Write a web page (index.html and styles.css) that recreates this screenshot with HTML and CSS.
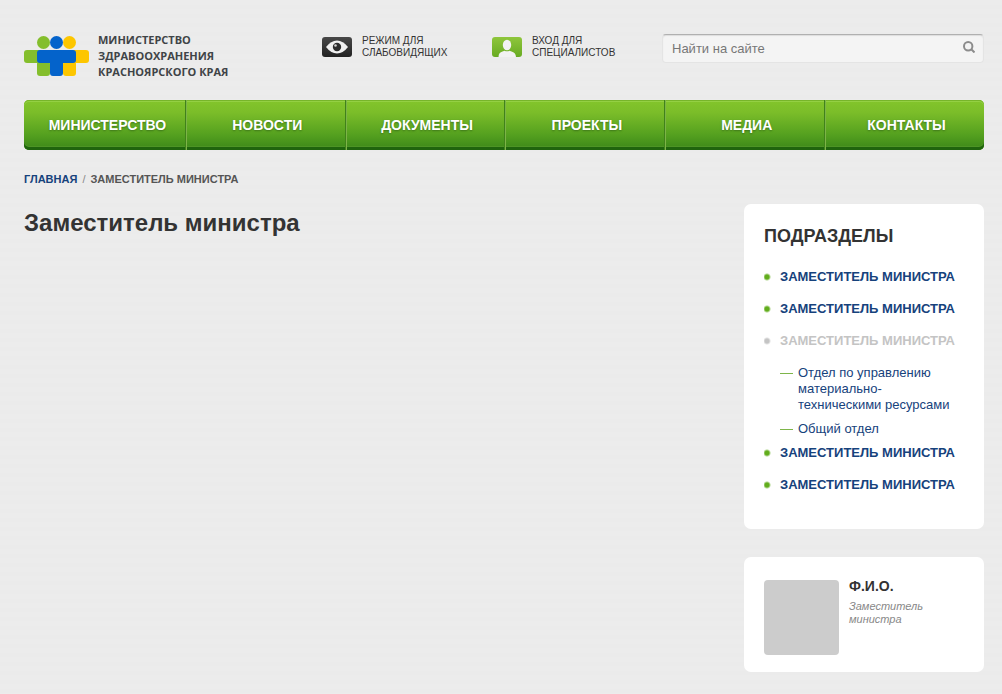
FILE: index.html
```html
<!DOCTYPE html>
<html lang="ru">
<head>
<meta charset="utf-8">
<meta name="viewport" content="width=device-width, initial-scale=1">
<title>Заместитель министра</title>
<link rel="stylesheet" href="styles.css">
</head>
<body>
<div class="page">
  <header class="header">
    <a class="logo" href="#">
      <svg class="logo-mark" width="65" height="42" viewBox="0 0 65 42" aria-hidden="true">
        <path fill="#84be2c" d="M3 15h13v13H3a3 3 0 0 1-3-3v-7a3 3 0 0 1 3-3z"/>
        <rect x="13" y="26" width="13" height="15" rx="3" fill="#84be2c"/>
        <path fill="#fdc600" d="M49 15h13a3 3 0 0 1 3 3v7a3 3 0 0 1-3 3H49z"/>
        <rect x="39" y="26" width="13" height="15" rx="3" fill="#fdc600"/>
        <path fill="#0463cb" d="M16 15h33a3 3 0 0 1 3 3v7a3 3 0 0 1-3 3H39v10a3 3 0 0 1-3 3h-7a3 3 0 0 1-3-3V28H16a3 3 0 0 1-3-3v-7a3 3 0 0 1 3-3z"/>
        <circle cx="19.500" cy="7.500" r="6.500" fill="#84be2c"/>
        <circle cx="45.500" cy="7.500" r="6.500" fill="#fdc600"/>
        <circle cx="32.500" cy="7.500" r="6.500" fill="#0463cb"/>
      </svg>
      <span class="logo-text">МИНИСТЕРСТВО<br>ЗДРАВООХРАНЕНИЯ<br>КРАСНОЯРСКОГО КРАЯ</span>
    </a>
    <a class="tool" href="#">
      <svg width="30" height="20" viewBox="0 0 30 20" aria-hidden="true">
        <defs><linearGradient id="dark" x1="0" y1="0" x2="0" y2="1"><stop offset="0" stop-color="#484848"/><stop offset="1" stop-color="#222"/></linearGradient></defs>
        <rect width="30" height="20" rx="3" fill="url(#dark)"/>
        <path fill="#f0f0f0" d="M4 10Q9 3.500 15 3.500T26 10Q21 16.500 15 16.500T4 10z"/>
        <circle cx="15" cy="10" r="4.200" fill="#2c2c2c"/>
        <circle cx="13.500" cy="8.500" r="1.300" fill="#d0d0d0"/>
      </svg>
      <span>РЕЖИМ ДЛЯ<br>СЛАБОВИДЯЩИХ</span>
    </a>
    <a class="tool" href="#">
      <svg width="30" height="20" viewBox="0 0 30 20" aria-hidden="true">
        <defs><linearGradient id="green" x1="0" y1="0" x2="0" y2="1"><stop offset="0" stop-color="#8fc63c"/><stop offset="1" stop-color="#68ab22"/></linearGradient></defs>
        <rect width="30" height="20" rx="3" fill="url(#green)"/>
        <ellipse cx="15" cy="8" rx="4.200" ry="5.200" fill="#f2f2f2"/>
        <path fill="#f2f2f2" d="M6.500 20c0-3 1.500-5 4-5.500l2-.8q2.500 1.300 5 0l2 .8c2.500.5 4.500 2.500 4.500 5.500z"/>
      </svg>
      <span>ВХОД ДЛЯ<br>СПЕЦИАЛИСТОВ</span>
    </a>
    <form class="search" role="search">
      <input class="search-input" type="search" placeholder="Найти на сайте" aria-label="Найти на сайте">
      <button class="search-button" type="button" aria-label="Найти">
        <svg width="12" height="12" viewBox="0 0 12 12" fill="none" stroke="#8c8c8c" stroke-width="2" aria-hidden="true"><circle cx="5.200" cy="5.200" r="4.200"/><path d="M8 8l3.500 3.500"/></svg>
      </button>
    </form>
  </header>

  <nav class="nav" aria-label="Основное меню">
    <a href="#">МИНИСТЕРСТВО</a>
    <a href="#">НОВОСТИ</a>
    <a href="#">ДОКУМЕНТЫ</a>
    <a href="#">ПРОЕКТЫ</a>
    <a href="#">МЕДИА</a>
    <a href="#">КОНТАКТЫ</a>
  </nav>

  <nav class="crumbs" aria-label="Навигация">
    <a href="#">ГЛАВНАЯ</a><span class="crumb-sep">/</span><span>ЗАМЕСТИТЕЛЬ МИНИСТРА</span>
  </nav>

  <div class="columns">
    <main class="main"><h1>Заместитель министра</h1></main>
    <aside class="sidebar">
      <section class="card sections">
        <h2>ПОДРАЗДЕЛЫ</h2>
        <ul class="menu">
          <li><a href="#">ЗАМЕСТИТЕЛЬ МИНИСТРА</a></li>
          <li><a href="#">ЗАМЕСТИТЕЛЬ МИНИСТРА</a></li>
          <li class="current"><span>ЗАМЕСТИТЕЛЬ МИНИСТРА</span>
            <ul class="submenu">
              <li><a href="#">Отдел по управлению материально-техническими ресурсами</a></li>
              <li><a href="#">Общий отдел</a></li>
            </ul>
          </li>
          <li><a href="#">ЗАМЕСТИТЕЛЬ МИНИСТРА</a></li>
          <li><a href="#">ЗАМЕСТИТЕЛЬ МИНИСТРА</a></li>
        </ul>
      </section>
      <section class="card person">
        <div class="photo"></div>
        <div class="person-info">
          <h3>Ф.И.О.</h3>
          <p>Заместитель министра</p>
        </div>
      </section>
    </aside>
  </div>
</div>
</body>
</html>
```

FILE: styles.css
```css
* { box-sizing: border-box; }

body {
  margin: 0;
  background: #ebebeb repeating-linear-gradient(#ececec 0 5px, #ebebeb 5px 9px);
  color: #333;
  font-family: "Liberation Sans", Arial, sans-serif;
  font-size: 13px;
  line-height: 16px;
}

a { color: #16427c; text-decoration: none; }
h1, h2, h3, p, ul { margin: 0; padding: 0; }
ul { list-style: none; }
svg { display: block; flex: none; }

.page { padding: 32px 18px 22px 24px; }

.header {
  display: grid;
  grid-template-columns: 298fr 170fr 170fr 322fr;
  align-items: start;
  height: 68px;
}

.logo { display: flex; gap: 9px; color: #3f4447; }
.logo-mark { margin-top: 3px; }
.logo-text {
  font-family: "Open Sans", "Noto Sans", sans-serif;
  font-size: 11px;
  font-weight: 700;
  white-space: nowrap;
}

.tool {
  display: flex;
  gap: 10px;
  padding-top: 3px;
  color: #333;
  font-size: 10px;
  line-height: 12px;
  white-space: nowrap;
}
.tool svg { margin-top: 2px; }

.search {
  display: flex;
  height: 29px;
  margin-top: 2px;
  border: 1px solid #e4e4e4;
  border-top-color: #b0b0b0;
  border-radius: 4px;
  background: #f4f4f4;
  box-shadow: inset 0 1px 1px #ddd;
}
.search-input {
  flex: 1;
  min-width: 0;
  padding: 0 9px 1px;
  border: 0;
  background: none;
  color: #555;
  font: 13px "Liberation Sans", Arial, sans-serif;
}
.search-input::placeholder { color: #777; opacity: 1; }
.search-button {
  padding: 0 8px 4px;
  border: 0;
  background: none;
}

.nav {
  display: flex;
  height: 50px;
  padding-left: 2px;
  overflow: hidden;
  border-radius: 5px;
  background: linear-gradient(#83c52b, #7bbd29 25%, #54a01f 70%, #3a8618);
  box-shadow: inset 0 1px #77b52a, inset 0 2px #94d043, inset 0 -3px #1f640d, inset 0 -4px #4d9425;
}
.nav a {
  flex: 1;
  padding-left: 4px;
  border-left: 1px solid #40821a;
  box-shadow: inset 1px 0 #7db348;
  color: #fff;
  font-size: 14px;
  font-weight: 700;
  line-height: 50px;
  text-align: center;
  text-shadow: 0 1px 2px #3c741a;
}
.nav a:first-child { border-left: 0; box-shadow: none; }

.crumbs {
  display: flex;
  gap: 5px;
  margin-top: 21px;
  color: #555;
  font-size: 11px;
  font-weight: 700;
}
.crumb-sep { color: #888; font-weight: 400; }

.columns {
  display: flex;
  justify-content: space-between;
  gap: 24px;
  margin-top: 17px;
}
.main { flex: 1; }
h1 { padding-top: 4px; font-size: 24px; line-height: 30px; }

.sidebar { display: flex; flex: none; flex-direction: column; gap: 28px; width: 240px; }
.card { padding: 20px; border-radius: 7px; background: #fff; }
.sections { padding-bottom: 36px; }
h2 { margin-bottom: 21px; font-size: 18px; line-height: 24px; }

.menu { display: grid; gap: 16px; }
.menu > li {
  padding-left: 16px;
  background: radial-gradient(circle at 3px 8px, #62ad1d 2px, transparent 4px) no-repeat;
  font-weight: 700;
}
.menu > .current {
  margin-bottom: -8px;
  background-image: radial-gradient(circle at 3px 8px, #c4c4c4 2px, transparent 4px);
  color: #c4c4c4;
}
.submenu { display: grid; gap: 8px; margin-top: 16px; }
.submenu li {
  padding-left: 18px;
  background: linear-gradient(#7eb54a, #7eb54a) 0 8px / 13px 1px no-repeat;
  font-weight: 400;
}

.person { display: flex; gap: 10px; padding-top: 23px; padding-bottom: 17px; }
.photo { flex: none; width: 75px; height: 75px; border-radius: 4px; background: #ccc; }
.person-info { flex: 1; }
h3 { margin: -2px 0 6px; font-size: 14px; line-height: 16px; }
.person p { color: #888; font-size: 11px; font-style: italic; line-height: 13px; }
```
